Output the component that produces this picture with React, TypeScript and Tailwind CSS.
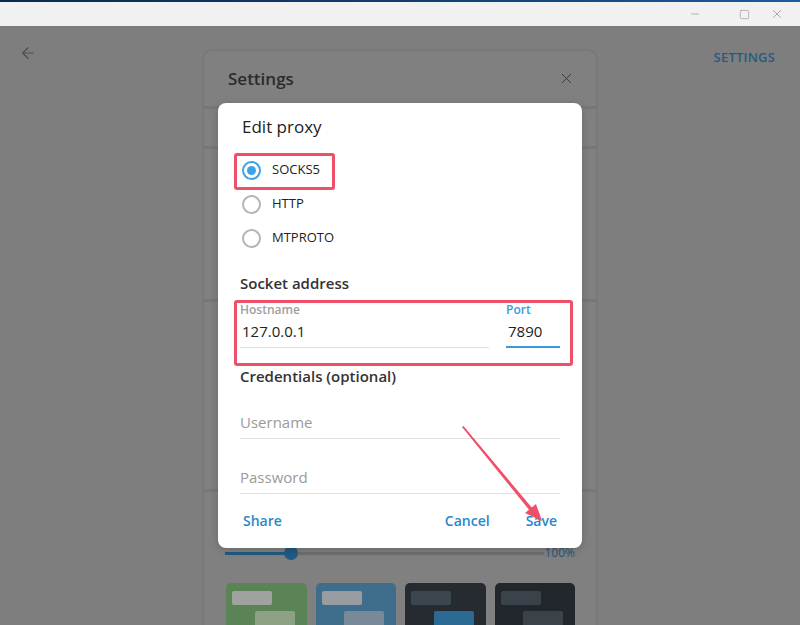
import { X, ArrowLeft, Minus, Square } from 'lucide-react';

function Radio({ label, checked }: { label: string; checked?: boolean }) {
  return (
    <div className="flex items-center h-[34px] pl-[24px]">
      <div
        className={
          'w-[19px] h-[19px] rounded-full border-2 flex items-center justify-center ' +
          (checked ? 'border-[#3fa2e6]' : 'border-[#b5b5b5]')
        }
      >
        {checked && <div className="w-[9px] h-[9px] rounded-full bg-[#3fa2e6]" />}
      </div>
      <span className="ml-[11px] text-[13px] text-[#222]">{label}</span>
    </div>
  );
}

const themes = [
  { bg: 'bg-[#5a8456]', a: 'bg-[#a0a29f]', b: 'bg-[#8fa184]' },
  { bg: 'bg-[#3f6d8c]', a: 'bg-[#999da1]', b: 'bg-[#788a98]' },
  { bg: 'bg-[#252b31]', a: 'bg-[#3c464e]', b: 'bg-[#2b6a92]' },
  { bg: 'bg-[#21272d]', a: 'bg-[#3a434a]', b: 'bg-[#3a434a]' },
];

export default function App() {
  return (
    <div className="relative w-[800px] h-[625px] overflow-hidden flex flex-col font-['Open_Sans','Noto_Sans',sans-serif] bg-[#7e7e7e]">
      {/* window title bar */}
      <div className="shrink-0 h-[2px] bg-gradient-to-r from-[#0b2a4f] via-[#0f3d70] to-[#1b5c9a]" />
      <div className="shrink-0 h-[24px] bg-[#f1f1f1] flex items-center justify-end pr-[16px] text-[#8a8a8a]">
        <Minus className="w-[12px] h-[12px]" strokeWidth={1.2} />
        <Square className="w-[11px] h-[11px] ml-[38px]" strokeWidth={1.2} />
        <X className="w-[14px] h-[14px] ml-[20px]" strokeWidth={1.2} />
      </div>

      {/* dimmed app */}
      <div className="flex-1 min-h-0 grid grid-cols-[204px_392px_204px]">
        <div className="pt-[18px] pl-[19px]">
          <ArrowLeft className="w-[18px] h-[18px] text-[#4e4e4e]" strokeWidth={1.6} />
        </div>

        <div className="mt-[25px] flex flex-col bg-[#808080] rounded-t-[8px] shadow-[0_0_3px_rgba(0,0,0,0.18)]">
          <div className="shrink-0 h-[55px] flex items-center justify-between pl-[24px] pr-[21px]">
            <span className="text-[17px] font-semibold text-[#2b2b2b]">Settings</span>
            <X className="w-[17px] h-[17px] text-[#3d3d3d]" strokeWidth={1.4} />
          </div>
          <div className="shrink-0 h-[3px] bg-[#777777]" />
          <div className="shrink-0 h-[37px]" />
          <div className="shrink-0 h-[3px] bg-[#777777]" />
          <div className="shrink-0 h-[150px]" />
          <div className="shrink-0 h-[3px] bg-[#777777]" />
          <div className="shrink-0 h-[187px]" />
          <div className="shrink-0 h-[3px] bg-[#777777]" />
          <div className="flex-1 pt-[54px] px-[21px]">
            <div className="h-[14px] flex items-center">
              <div className="h-[3px] w-[66px] bg-[#215a82]" />
              <div className="w-[14px] h-[14px] rounded-full bg-[#215a82] -ml-[7px]" />
              <div className="h-[3px] w-[246px] bg-[#707070]" />
              <span className="ml-auto text-[12px] text-[#2a5676]">100%</span>
            </div>
            <div className="mt-[23px] grid grid-cols-4 gap-[9px] pl-[1px]">
              {themes.map((t, i) => (
                <div key={i} className={'h-[60px] rounded-[5px] pt-[8px] px-[6px] ' + t.bg}>
                  <div className={'w-[40px] h-[14px] rounded-[2px] ' + t.a} />
                  <div className={'w-[40px] h-[16px] rounded-[2px] mt-[6px] ml-auto mr-[6px] ' + t.b} />
                </div>
              ))}
            </div>
          </div>
        </div>

        <div className="pt-[18px] pr-[25px] text-right">
          <span className="text-[13px] font-semibold text-[#275a80] tracking-[0.2px]">SETTINGS</span>
        </div>
      </div>

      {/* edit proxy dialog */}
      <div className="absolute left-[218px] top-[103px] w-[364px] h-[445px] bg-white rounded-[8px] shadow-[0_2px_8px_rgba(0,0,0,0.2)] flex flex-col">
        <div className="h-[36px] pt-[12px] pl-[24px] text-[17px] font-medium text-[#222] leading-[24px]">Edit proxy</div>
        <div className="mt-[14px]">
          <Radio label="SOCKS5" checked />
          <Radio label="HTTP" />
          <Radio label="MTPROTO" />
        </div>

        <div className="mt-[17px] pl-[22px] text-[15px] font-semibold text-[#333] leading-[22px]">Socket address</div>
        <div className="mt-[8px] flex px-[22px] gap-[17px]">
          <div className="flex-1">
            <div className="text-[12px] font-semibold text-[#a0a0a0] leading-[16px]">Hostname</div>
            <div className="mt-[3px] pl-[2px] text-[15px] text-[#222] leading-[20px]">127.0.0.1</div>
            <div className="mt-[6px] h-[1px] bg-[#e0e0e0]" />
          </div>
          <div className="w-[54px]">
            <div className="text-[12px] font-semibold text-[#3a9ade] leading-[16px]">Port</div>
            <div className="mt-[3px] pl-[2px] text-[15px] text-[#222] leading-[20px]">7890</div>
            <div className="mt-[5px] h-[2px] bg-[#3a9ade]" />
          </div>
        </div>

        <div className="mt-[17px] pl-[22px] text-[15px] font-semibold text-[#333] leading-[22px]">Credentials (optional)</div>
        <div className="px-[22px]">
          <div className="mt-[25px] text-[15px] text-[#9a9a9a] leading-[20px]">Username</div>
          <div className="mt-[6px] h-[1px] bg-[#e0e0e0]" />
          <div className="mt-[28px] text-[15px] text-[#9a9a9a] leading-[20px]">Password</div>
          <div className="mt-[6px] h-[1px] bg-[#e0e0e0]" />
        </div>

        <div className="mt-[17px] flex items-center pl-[25px] pr-[25px] text-[14px] font-semibold text-[#2a88cc] leading-[20px]">
          <span>Share</span>
          <span className="ml-auto">Cancel</span>
          <span className="ml-[36px]">Save</span>
        </div>
      </div>

      {/* red annotations */}
      <div className="absolute left-[234px] top-[153px] w-[101px] h-[37px] border-[3px] border-[#ef4f68] rounded-[3px]" />
      <div className="absolute left-[234px] top-[300px] w-[339px] h-[66px] border-[3px] border-[#ef4f68] rounded-[3px]" />
      <svg className="absolute inset-0 pointer-events-none" width="800" height="625">
        <polygon points="462,427 463.5,426 533,509 530,511" fill="#ef4f68" />
        <polygon points="542,521 525,513 536,504" fill="#ef4f68" />
      </svg>
    </div>
  );
}
